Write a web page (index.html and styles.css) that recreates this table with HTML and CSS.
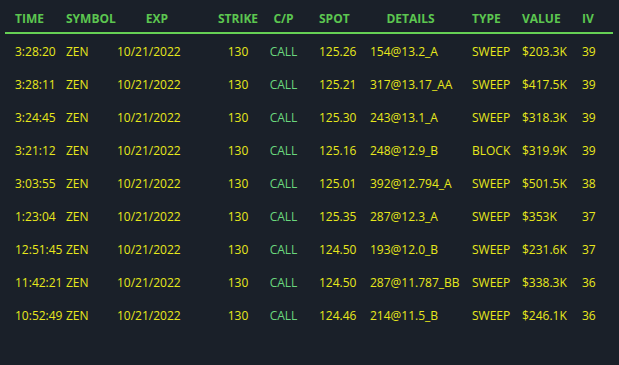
FILE: index.html
```html
<!DOCTYPE html>
<html>
<head>
<meta charset="utf-8">
<link rel="stylesheet" href="styles.css">
</head>
<body>
<div class="flow">
  <div class="row head">
    <div class="c-time">TIME</div>
    <div class="c-sym">SYMBOL</div>
    <div class="c-exp">EXP</div>
    <div class="c-strike">STRIKE</div>
    <div class="c-cp">C/P</div>
    <div class="c-spot">SPOT</div>
    <div class="c-det">DETAILS</div>
    <div class="c-type">TYPE</div>
    <div class="c-val">VALUE</div>
    <div class="c-iv">IV</div>
  </div>
  <div class="body">
  <div class="row"><div class="c-time">3:28:20</div><div class="c-sym">ZEN</div><div class="c-exp">10/21/2022</div><div class="c-strike">130</div><div class="c-cp call">CALL</div><div class="c-spot">125.26</div><div class="c-det">154@13.2_A</div><div class="c-type">SWEEP</div><div class="c-val">$203.3K</div><div class="c-iv">39</div></div>
  <div class="row"><div class="c-time">3:28:11</div><div class="c-sym">ZEN</div><div class="c-exp">10/21/2022</div><div class="c-strike">130</div><div class="c-cp call">CALL</div><div class="c-spot">125.21</div><div class="c-det">317@13.17_AA</div><div class="c-type">SWEEP</div><div class="c-val">$417.5K</div><div class="c-iv">39</div></div>
  <div class="row"><div class="c-time">3:24:45</div><div class="c-sym">ZEN</div><div class="c-exp">10/21/2022</div><div class="c-strike">130</div><div class="c-cp call">CALL</div><div class="c-spot">125.30</div><div class="c-det">243@13.1_A</div><div class="c-type">SWEEP</div><div class="c-val">$318.3K</div><div class="c-iv">39</div></div>
  <div class="row"><div class="c-time">3:21:12</div><div class="c-sym">ZEN</div><div class="c-exp">10/21/2022</div><div class="c-strike">130</div><div class="c-cp call">CALL</div><div class="c-spot">125.16</div><div class="c-det">248@12.9_B</div><div class="c-type">BLOCK</div><div class="c-val">$319.9K</div><div class="c-iv">39</div></div>
  <div class="row"><div class="c-time">3:03:55</div><div class="c-sym">ZEN</div><div class="c-exp">10/21/2022</div><div class="c-strike">130</div><div class="c-cp call">CALL</div><div class="c-spot">125.01</div><div class="c-det">392@12.794_A</div><div class="c-type">SWEEP</div><div class="c-val">$501.5K</div><div class="c-iv">38</div></div>
  <div class="row"><div class="c-time">1:23:04</div><div class="c-sym">ZEN</div><div class="c-exp">10/21/2022</div><div class="c-strike">130</div><div class="c-cp call">CALL</div><div class="c-spot">125.35</div><div class="c-det">287@12.3_A</div><div class="c-type">SWEEP</div><div class="c-val">$353K</div><div class="c-iv">37</div></div>
  <div class="row"><div class="c-time">12:51:45</div><div class="c-sym">ZEN</div><div class="c-exp">10/21/2022</div><div class="c-strike">130</div><div class="c-cp call">CALL</div><div class="c-spot">124.50</div><div class="c-det">193@12.0_B</div><div class="c-type">SWEEP</div><div class="c-val">$231.6K</div><div class="c-iv">37</div></div>
  <div class="row"><div class="c-time">11:42:21</div><div class="c-sym">ZEN</div><div class="c-exp">10/21/2022</div><div class="c-strike">130</div><div class="c-cp call">CALL</div><div class="c-spot">124.50</div><div class="c-det">287@11.787_BB</div><div class="c-type">SWEEP</div><div class="c-val">$338.3K</div><div class="c-iv">36</div></div>
  <div class="row"><div class="c-time">10:52:49</div><div class="c-sym">ZEN</div><div class="c-exp">10/21/2022</div><div class="c-strike">130</div><div class="c-cp call">CALL</div><div class="c-spot">124.46</div><div class="c-det">214@11.5_B</div><div class="c-type">SWEEP</div><div class="c-val">$246.1K</div><div class="c-iv">36</div></div>
  </div>
</div>
</body>
</html>
```
FILE: styles.css
```css
html, body {
  margin: 0;
  padding: 0;
  background: #1a2029;
  width: 619px;
  height: 365px;
  overflow: hidden;
}
.flow {
  font-family: "Open Sans", "Liberation Sans", sans-serif;
  font-size: 12px;
  color: #e8e81c;
}
.body {
  padding-top: 1px;
}
.row {
  display: grid;
  grid-template-columns: 51px 50px 102px 40px 51px 61px 102px 50px 60px 31px;
  padding-left: 15px;
  height: 33px;
  line-height: 33px;
  white-space: nowrap;
}
.head {
  margin: 0 6px 0 5px;
  padding-left: 10px;
  padding-top: 9px;
  box-sizing: border-box;
  height: 34px;
  line-height: 20px;
  border-bottom: 2px solid #66d055;
  font-weight: 700;
  color: #5cc650;
}
.c-strike, .c-cp { text-align: center; }
.c-strike { margin: 0 -20px; }
.c-cp { margin: 0 -10px; }
.c-exp { padding-left: 1px; }
.head .c-exp { padding: 0 20px 0 0; text-align: center; }
.c-spot { padding-left: 10px; }
.head .c-det { padding-right: 21px; text-align: center; }
.call { color: #6ad87e; }
```
